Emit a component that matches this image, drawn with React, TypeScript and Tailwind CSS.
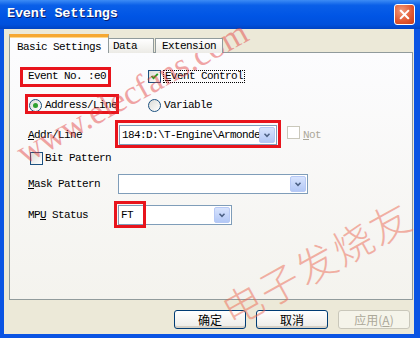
import type { ReactNode } from 'react';

const mono = "font-['Liberation_Mono','DejaVu_Sans_Mono',monospace] text-[11px] tracking-[-0.6px]";

function Check({ checked, disabled }: { checked?: boolean; disabled?: boolean }) {
  return (
    <span
      className={
        'relative inline-block h-[13px] w-[13px] shrink-0 border ' +
        (disabled
          ? 'border-[#cac8bb] bg-white'
          : 'border-[#1c5180] bg-[linear-gradient(135deg,#dcdcd7,#ffffff)]')
      }
    >
      {checked ? (
        <svg viewBox="0 0 11 11" className="absolute left-0 top-0 h-[11px] w-[11px]">
          <path d="M2.5 5 L4.5 7.2 L8.8 2.8" fill="none" stroke="#21a121" strokeWidth="1.8" />
        </svg>
      ) : null}
    </span>
  );
}

function Radio({ checked }: { checked?: boolean }) {
  return (
    <span className="relative inline-flex h-[13px] w-[13px] shrink-0 items-center justify-center rounded-full border border-[#1c5180] bg-[linear-gradient(135deg,#dcdcd7,#ffffff)]">
      {checked ? <span className="h-[5px] w-[5px] rounded-full bg-[#2fa12f]" /> : null}
    </span>
  );
}

function Combo({ width, value }: { width: string; value?: string }) {
  return (
    <div className={`flex h-[20px] items-center border border-[#7f9db9] bg-white ${width}`}>
      <div className={`min-w-0 flex-1 overflow-hidden whitespace-nowrap pl-[2px] text-black ${mono}`}>
        {value}
      </div>
      <div className="mr-[1px] flex h-[16px] w-[16px] shrink-0 items-center justify-center rounded-[2px] border border-[#b7c9f5] bg-[linear-gradient(#d7e3fd,#b3c8f6)]">
        <svg viewBox="0 0 8 6" className="h-[5px] w-[8px]">
          <path d="M1 1 L4 4 L7 1" fill="none" stroke="#4d6185" strokeWidth="1.8" />
        </svg>
      </div>
    </div>
  );
}

function Btn({ children, disabled }: { children: ReactNode; disabled?: boolean }) {
  return (
    <div
      className={
        "flex h-[19px] w-[72px] items-center justify-center rounded-[3px] border font-['Noto_Sans_CJK_SC',sans-serif] text-[12px] " +
        (disabled
          ? 'border-[#c9c7ba] bg-[#f5f4ea] text-[#aca899]'
          : 'border-[#003c74] bg-[linear-gradient(#ffffff,#ecebe6)] text-black shadow-[inset_0_-2px_0_#d6d0c5]')
      }
    >
      {children}
    </div>
  );
}

function RedBox({ cls }: { cls: string }) {
  return <div className={`pointer-events-none absolute border-[3px] border-[#e8141c] ${cls}`} />;
}

export default function App() {
  return (
    <div className="relative h-[338px] w-[420px] overflow-hidden bg-[#0a54e3]">
      {/* title bar */}
      <div className="flex h-[29px] items-center justify-between bg-[linear-gradient(#3d8cf5_0%,#0a5fe8_18%,#0055e5_55%,#0050dc_85%,#0043c2_100%)] pl-[7px] pr-[5px]">
        <span className="font-['Liberation_Mono',monospace] text-[13.5px] font-bold tracking-[-0.2px] text-white [text-shadow:1px_1px_0_#0a1e6e]">
          Event Settings
        </span>
        <div className="flex h-[21px] w-[21px] items-center justify-center rounded-[3px] border border-white bg-[radial-gradient(circle_at_35%_30%,#f29a7c,#e0562f_60%,#c23d1a)]">
          <svg viewBox="0 0 12 12" className="h-[11px] w-[11px]">
            <path d="M2 2 L10 10 M10 2 L2 10" stroke="white" strokeWidth="2.2" strokeLinecap="square" />
          </svg>
        </div>
      </div>

      {/* body */}
      <div className="ml-[4px] mr-[6px] flex h-[305px] flex-col bg-[#ece9d8]">
        {/* tabs */}
        <div className={`relative z-10 ml-[5px] mt-[5px] flex h-[19px] items-end text-black ${mono}`}>
          <div className="flex h-[19px] w-[100px] items-start justify-center border-x border-t-[3px] border-x-[#919b9c] border-t-[#f6a832] bg-[#fcfcfe] pt-[2px] shadow-[inset_0_1px_0_#ffd78a]">
            Basic Settings
          </div>
          <div className="flex h-[15px] w-[45px] items-center border-r border-t border-[#919b9c] bg-[linear-gradient(#ffffff,#ecebe6)] pl-[4px]">
            Data
          </div>
          <div className="ml-[1px] flex h-[15px] w-[68px] items-center border-x border-t border-[#919b9c] bg-[linear-gradient(#ffffff,#ecebe6)] pl-[6px]">
            Extension
          </div>
        </div>

        {/* panel */}
        <div className={`-mt-[1px] ml-[5px] mr-[1px] flex h-[248px] flex-col border border-[#919b9c] bg-[linear-gradient(#fcfcfe,#f4f3ee)] text-black ${mono}`}>
          <div className="ml-[18px] mt-[13px] flex h-[20px] items-center">
            <span className="w-[120px]">Event No. :e0</span>
            <Check checked />
            <span className="ml-[2px] border border-dotted border-black px-[1px] leading-[11px]">
              <u>E</u>vent Control
            </span>
          </div>
          <div className="ml-[19px] mt-[9px] flex h-[20px] items-center">
            <Radio checked />
            <span className="ml-[3px] w-[103px]">Address/Line</span>
            <Radio />
            <span className="ml-[3px]">Variable</span>
          </div>
          <div className="ml-[18px] mt-[10px] flex h-[20px] items-center">
            <span className="w-[91px]">
              <u>A</u>ddr/Line
            </span>
            <Combo width="w-[158px]" value="184:D:\T-Engine\Armonde" />
            <span className="ml-[10px]">
              <Check disabled />
            </span>
            <span className="ml-[3px] text-[#aca899]">
              <u>N</u>ot
            </span>
          </div>
          <div className="ml-[20px] mt-[7px] flex h-[13px] items-center">
            <Check />
            <span className="ml-[2px]">Bit Pattern</span>
          </div>
          <div className="ml-[18px] mt-[9px] flex h-[20px] items-center">
            <span className="w-[90px]">
              <u>M</u>ask Pattern
            </span>
            <Combo width="w-[190px]" />
          </div>
          <div className="ml-[18px] mt-[11px] flex h-[20px] items-center">
            <span className="w-[90px]">
              MP<u>U</u> Status
            </span>
            <Combo width="w-[114px]" value="FT" />
          </div>
        </div>

        {/* buttons */}
        <div className="mr-[4px] mt-[10px] flex justify-end gap-[10px]">
          <Btn>确定</Btn>
          <Btn>取消</Btn>
          <Btn disabled>
            应用(<u>A</u>)
          </Btn>
        </div>
      </div>

      {/* annotation boxes */}
      <RedBox cls="left-[20px] top-[67px] h-[20px] w-[91px]" />
      <RedBox cls="left-[25px] top-[94px] h-[20px] w-[94px]" />
      <RedBox cls="left-[115px] top-[120px] h-[28px] w-[166px]" />
      <RedBox cls="left-[114px] top-[201px] h-[27px] w-[32px]" />

      {/* watermarks */}
      <div className="pointer-events-none absolute left-[132px] top-[92px] -translate-x-1/2 -translate-y-1/2 rotate-[-29deg] whitespace-nowrap font-['Liberation_Serif',serif] text-[34px] text-[#e23a3a] opacity-45">
        www.elecfans.com
      </div>
      <div className="pointer-events-none absolute left-[316px] top-[262px] -translate-x-1/2 -translate-y-1/2 rotate-[-29deg] whitespace-nowrap font-['Noto_Sans_CJK_SC',sans-serif] text-[40px] font-light tracking-[2px] text-[#ec6a55] opacity-50">
        电子发烧友
      </div>
    </div>
  );
}
